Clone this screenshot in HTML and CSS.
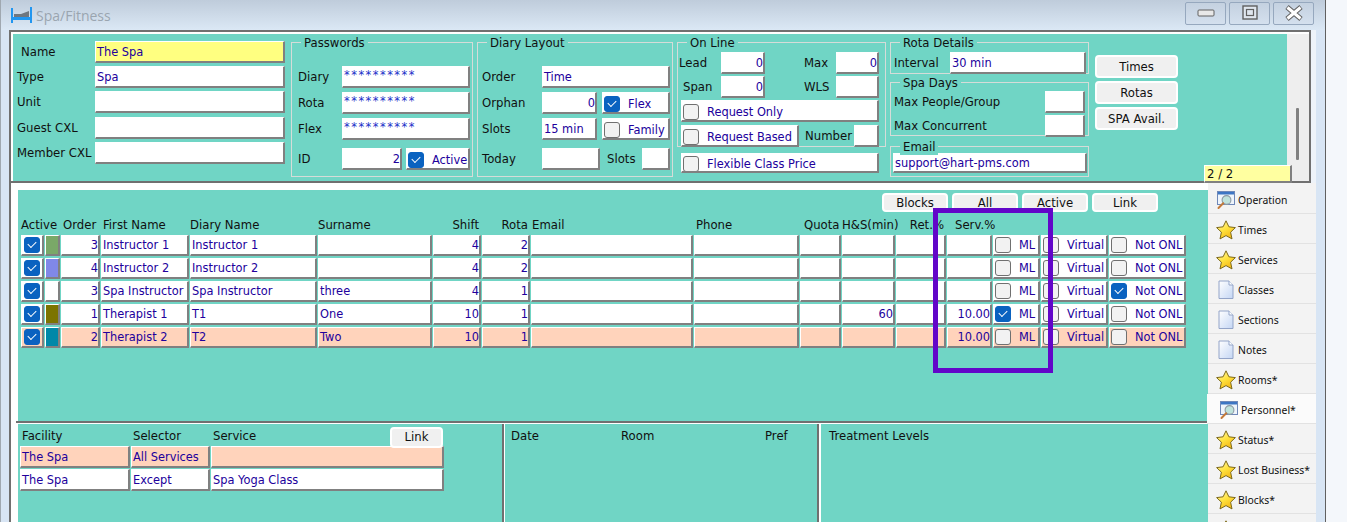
FILE: index.html
```html
<!DOCTYPE html>
<html lang="en">
<head>
  <meta charset="UTF-8">
  <title>Spa/Fitness</title>
  <link rel="stylesheet" href="styles.css">
</head>
<body>

  <!-- Shared icons -->
  <svg class="icon-defs" width="0" height="0">
    <defs>
      <linearGradient id="star-fill" x1="0" y1="0" x2="0.6" y2="1">
        <stop offset="0" stop-color="#fff8c0"/>
        <stop offset="0.55" stop-color="#ffe23c"/>
        <stop offset="1" stop-color="#f4b818"/>
      </linearGradient>
      <linearGradient id="page-fill" x1="0" y1="0" x2="1" y2="1">
        <stop offset="0" stop-color="#ffffff"/>
        <stop offset="1" stop-color="#c4d6f4"/>
      </linearGradient>
    </defs>
    <symbol id="star" viewBox="0 0 20 20">
      <path d="M10 .8 L12.9 6.8 L19.4 7.6 L14.6 12.2 L16 18.9 L10 15.6 L4 18.9 L5.4 12.2 L.6 7.6 L7.1 6.8 Z" fill="url(#star-fill)" stroke="#7d6a1c" stroke-width="1" stroke-linejoin="round"/>
    </symbol>
    <symbol id="page" viewBox="0 0 20 20">
      <path d="M3 1 H13 L17 5 V18.5 H3 Z" fill="url(#page-fill)" stroke="#93a4c8" stroke-width="1"/>
      <path d="M13 1 V5 H17" fill="#ffffff" stroke="#93a4c8" stroke-width="1"/>
    </symbol>
    <symbol id="lens" viewBox="0 0 20 20">
      <rect x="1.5" y="1.5" width="17" height="13" fill="#eef4fb" stroke="#6f88b8"/>
      <rect x="2" y="2" width="16" height="2.5" fill="#3d76c4"/>
      <circle cx="10.5" cy="10" r="4.4" fill="#bfe3dc" stroke="#8c9aa4" stroke-width="1.1"/>
      <path d="M7.2 13.2 L2.5 18" stroke="#c47a3a" stroke-width="2" stroke-linecap="round"/>
    </symbol>
  </svg>

  <div class="app">
    <div class="titlebar">
      <svg class="bed-icon" width="21" height="16" viewBox="0 0 21 16">
        <rect x="0" y="1" width="2" height="15" fill="#2196f0"/>
        <rect x="19" y="0" width="2" height="16" fill="#2196f0"/>
        <rect x="2" y="10" width="17" height="3" fill="#2196f0"/>
        <path d="M3 10 V7 H10 L18 4 V10 Z" fill="#6f7780"/>
      </svg>
      <span class="title-text">Spa/Fitness</span>
      <div class="window-buttons">
        <div class="window-btn">
          <svg width="18" height="10" viewBox="0 0 18 10"><rect x="1" y="2" width="16" height="6" rx="1" fill="#e8e8e8" stroke="#606060"/></svg>
        </div>
        <div class="window-btn">
          <svg width="18" height="16" viewBox="0 0 18 16"><rect x="2" y="1" width="14" height="13" fill="#dfe6ee" stroke="#606060" stroke-width="1.4"/><rect x="5.5" y="4.5" width="7" height="6" fill="none" stroke="#606060" stroke-width="1.2"/></svg>
        </div>
        <div class="window-btn">
          <svg width="18" height="16" viewBox="0 0 18 16"><path d="M2 2 L16 14 M16 2 L2 14" stroke="#606060" stroke-width="5"/><path d="M2.5 2.5 L15.5 13.5 M15.5 2.5 L2.5 13.5" stroke="#ffffff" stroke-width="3"/></svg>
        </div>
      </div>
    </div>

    <div class="content">
      <!-- Top form -->
      <div class="top-panel">
        <div class="top-form">

          <div class="main-fields">
            <label class="name-label">Name</label><div class="field yellow">The Spa</div>
            <label>Type</label><div class="field">Spa</div>
            <label>Unit</label><div class="field"></div>
            <label>Guest CXL</label><div class="field"></div>
            <label>Member CXL</label><div class="field"></div>
          </div>

          <div class="group passwords">
            <span class="legend">Passwords</span>
            <div class="group-grid">
              <label>Diary</label><div class="field stars">**********</div>
              <label>Rota</label><div class="field stars">**********</div>
              <label>Flex</label><div class="field stars">**********</div>
              <label>ID</label>
              <div class="pair">
                <div class="field num id-field">2</div>
                <div class="field check-field active-box"><span class="check on"></span>Active</div>
              </div>
            </div>
          </div>

          <div class="group diary">
            <span class="legend">Diary Layout</span>
            <div class="group-grid">
              <label>Order</label><div class="field">Time</div>
              <label>Orphan</label>
              <div class="pair">
                <div class="field num short">0</div>
                <div class="field check-field side-box"><span class="check on"></span>Flex</div>
              </div>
              <label>Slots</label>
              <div class="pair">
                <div class="field short">15 min</div>
                <div class="field check-field side-box"><span class="check"></span>Family</div>
              </div>
              <label>Today</label>
              <div class="pair">
                <div class="field today"></div>
                <label class="slots-label">Slots</label>
                <div class="field slots"></div>
              </div>
            </div>
          </div>

          <div class="online-col">
            <div class="group online">
              <span class="legend">On Line</span>
              <div class="online-row">
                <label class="lead-label">Lead</label><div class="field num small">0</div>
                <label class="right-label">Max</label><div class="field num small-b">0</div>
              </div>
              <div class="online-row">
                <label class="span-label">Span</label><div class="field num small">0</div>
                <label class="right-label">WLS</label><div class="field small-b"></div>
              </div>
              <div class="field check-field request-only"><span class="check"></span>Request Only</div>
              <div class="online-row">
                <div class="field check-field request-based"><span class="check"></span>Request Based</div>
                <label class="number-label">Number</label><div class="field number"></div>
              </div>
            </div>
            <div class="field check-field flexible"><span class="check"></span>Flexible Class Price</div>
          </div>

          <div class="rota-col">
            <div class="group rota">
              <span class="legend">Rota Details</span>
              <div class="online-row">
                <label class="interval-label">Interval</label><div class="field interval">30 min</div>
              </div>
            </div>
            <div class="group spa-days">
              <span class="legend">Spa Days</span>
              <div class="days-row"><label>Max People/Group</label><div class="field days"></div></div>
              <div class="days-row"><label>Max Concurrent</label><div class="field days"></div></div>
            </div>
            <div class="group email">
              <span class="legend">Email</span>
              <div class="field email-field">support@hart-pms.com</div>
            </div>
          </div>

          <div class="button-col">
            <div class="btn">Times</div>
            <div class="btn">Rotas</div>
            <div class="btn">SPA Avail.</div>
          </div>
        </div>
        <div class="scroll-gutter"><div class="scroll-thumb"></div></div>
      </div>

      <div class="main-row">
        <div class="main-left">
          <!-- Personnel list -->
          <div class="staff-panel">
            <div class="staff-actions">
              <div class="btn">Blocks</div>
              <div class="btn">All</div>
              <div class="btn">Active</div>
              <div class="btn">Link</div>
            </div>
            <div class="staff-grid">
              <div class="head">Active</div><div class="head"></div><div class="head pad">Order</div>
              <div class="head pad">First Name</div><div class="head">Diary Name</div><div class="head">Surname</div>
              <div class="head right">Shift</div><div class="head right">Rota</div><div class="head pad-1">Email</div>
              <div class="head pad">Phone</div><div class="head pad-4">Quota</div><div class="head">H&amp;S(min)</div>
              <div class="head right">Ret.%</div><div class="head serv">Serv.%</div><div class="head"></div><div class="head"></div><div class="head"></div>

              <div class="field check-cell"><span class="check on"></span></div><div class="field swatch green"></div><div class="field num">3</div>
              <div class="field">Instructor 1</div><div class="field">Instructor 1</div><div class="field"></div>
              <div class="field num">4</div><div class="field num">2</div><div class="field"></div><div class="field"></div><div class="field"></div><div class="field"></div><div class="field"></div><div class="field"></div>
              <div class="field check-field split"><span class="check"></span>ML</div><div class="field check-field split"><span class="check"></span>Virtual</div><div class="field check-field split"><span class="check"></span>Not ONL</div>

              <div class="field check-cell"><span class="check on"></span></div><div class="field swatch periwinkle"></div><div class="field num">4</div>
              <div class="field">Instructor 2</div><div class="field">Instructor 2</div><div class="field"></div>
              <div class="field num">4</div><div class="field num">2</div><div class="field"></div><div class="field"></div><div class="field"></div><div class="field"></div><div class="field"></div><div class="field"></div>
              <div class="field check-field split"><span class="check"></span>ML</div><div class="field check-field split"><span class="check"></span>Virtual</div><div class="field check-field split"><span class="check"></span>Not ONL</div>

              <div class="field check-cell"><span class="check on"></span></div><div class="field swatch"></div><div class="field num">3</div>
              <div class="field">Spa Instructor</div><div class="field">Spa Instructor</div><div class="field">three</div>
              <div class="field num">4</div><div class="field num">1</div><div class="field"></div><div class="field"></div><div class="field"></div><div class="field"></div><div class="field"></div><div class="field"></div>
              <div class="field check-field split"><span class="check"></span>ML</div><div class="field check-field split"><span class="check"></span>Virtual</div><div class="field check-field split"><span class="check on"></span>Not ONL</div>

              <div class="field check-cell"><span class="check on"></span></div><div class="field swatch olive"></div><div class="field num">1</div>
              <div class="field">Therapist 1</div><div class="field">T1</div><div class="field">One</div>
              <div class="field num">10</div><div class="field num">1</div><div class="field"></div><div class="field"></div><div class="field"></div><div class="field num">60</div><div class="field"></div><div class="field num">10.00</div>
              <div class="field check-field split"><span class="check on"></span>ML</div><div class="field check-field split"><span class="check"></span>Virtual</div><div class="field check-field split"><span class="check"></span>Not ONL</div>

              <div class="field peach check-cell"><span class="check on"></span></div><div class="field swatch teal"></div><div class="field peach num">2</div>
              <div class="field peach">Therapist 2</div><div class="field peach">T2</div><div class="field peach">Two</div>
              <div class="field peach num">10</div><div class="field peach num">1</div><div class="field peach"></div><div class="field peach"></div><div class="field peach"></div><div class="field peach"></div><div class="field peach"></div><div class="field peach num">10.00</div>
              <div class="field peach check-field split"><span class="check"></span>ML</div><div class="field peach check-field split"><span class="check"></span>Virtual</div><div class="field peach check-field split"><span class="check"></span>Not ONL</div>
            </div>
          </div>

          <!-- Lower panels -->
          <div class="lower-row">
            <div class="lower-panel facility">
              <div class="facility-head">
                <span class="fac-col">Facility</span><span class="sel-col">Selector</span><span>Service</span>
                <div class="btn link-btn">Link</div>
              </div>
              <div class="facility-grid">
                <div class="field peach">The Spa</div><div class="field peach">All Services</div><div class="field peach"></div>
                <div class="field">The Spa</div><div class="field">Except</div><div class="field">Spa Yoga Class</div>
              </div>
            </div>
            <div class="lower-panel dates">
              <span class="date-col">Date</span><span class="room-col">Room</span><span>Pref</span>
            </div>
            <div class="lower-panel levels">Treatment Levels</div>
          </div>
        </div>

        <!-- Side tabs -->
        <div class="side-tabs">
          <div class="tab"><svg class="tab-icon"><use href="#lens"/></svg>Operation</div>
          <div class="tab"><svg class="tab-icon"><use href="#star"/></svg>Times</div>
          <div class="tab"><svg class="tab-icon"><use href="#star"/></svg>Services</div>
          <div class="tab"><svg class="tab-icon"><use href="#page"/></svg>Classes</div>
          <div class="tab"><svg class="tab-icon"><use href="#page"/></svg>Sections</div>
          <div class="tab"><svg class="tab-icon"><use href="#page"/></svg>Notes</div>
          <div class="tab"><svg class="tab-icon"><use href="#star"/></svg>Rooms*</div>
          <div class="tab selected"><svg class="tab-icon"><use href="#lens"/></svg>Personnel*</div>
          <div class="tab"><svg class="tab-icon"><use href="#star"/></svg>Status*</div>
          <div class="tab"><svg class="tab-icon"><use href="#star"/></svg>Lost Business*</div>
          <div class="tab"><svg class="tab-icon"><use href="#star"/></svg>Blocks*</div>
          <div class="tab"><svg class="tab-icon"><use href="#star"/></svg></div>
        </div>
      </div>
    </div>

    <div class="record-count">2 / 2</div>
    <div class="highlight-box"></div>
  </div>

</body>
</html>
```

FILE: styles.css
```css
* {
  box-sizing: border-box;
}

html, body {
  margin: 0;
  padding: 0;
  height: 522px;
  overflow: hidden;
  background-color: #f4f7fb;
}

body {
  font-family: 'DejaVu Sans', sans-serif;
  font-size: 11.7px;
  color: #101010;
}

.icon-defs {
  position: absolute;
}

.app {
  position: relative;
  width: 1326px;
  height: 522px;
  background-color: #d8e5f4;
  border-left: 1px solid #a0a8b0;
  border-right: 1px solid #606060;
  overflow: hidden;
}

/* Title bar */
.titlebar {
  display: flex;
  align-items: center;
  height: 30px;
  padding-left: 10px;
  background: linear-gradient(180deg, #bfccdb 0%, #dbe8f5 100%);
}

.bed-icon {
  margin-right: 4px;
}

.title-text {
  font-family: 'Open Sans', sans-serif;
  font-size: 14px;
  color: #9aa5b0;
}

.window-buttons {
  display: flex;
  gap: 3px;
  margin-left: auto;
  margin-right: 11px;
  margin-top: -4px;
}

.window-btn {
  display: flex;
  align-items: center;
  justify-content: center;
  width: 41px;
  height: 23px;
  border: 1px solid #96a8be;
  border-radius: 2px;
  background: linear-gradient(180deg, #c4d1e0 0%, #d4e0ee 100%);
}

.content {
  width: 1307px;
  margin-left: 8px;
  background-color: #eef3f9;
}

/* Top form */
.top-panel {
  display: flex;
  width: 1302px;
  height: 153px;
  border: 2px solid #707070;
  background-color: #ffffff;
  padding: 2px 0 0 2px;
}

.top-form {
  display: flex;
  align-items: flex-start;
  width: 1274px;
  height: 147px;
  background-color: #70d5c5;
}

.scroll-gutter {
  width: 22px;
  padding: 74px 0 0 9px;
  background-color: #eeeeee;
}

.scroll-thumb {
  width: 3px;
  height: 52px;
  background-color: #808080;
  border-radius: 1px;
}

label {
  white-space: nowrap;
}

.field {
  height: 22px;
  padding: 0 0 0 1px;
  font-size: 11.4px;
  line-height: 20px;
  background-color: #ffffff;
  color: #21009c;
  border-style: solid;
  border-width: 1px 2px 2px 1px;
  border-color: #ffffff #808080 #808080 #ffffff;
  white-space: nowrap;
  overflow: hidden;
}

.num {
  text-align: right;
}

.yellow {
  background-color: #ffff80;
}

.peach {
  background-color: #ffd3bb;
}

.stars {
  color: #1a30c8;
  letter-spacing: 1.5px;
  line-height: 16px;
}

.check-field {
  display: flex;
  align-items: center;
  gap: 8px;
  padding: 0 0 0 1px;
}

.top-form .check-field {
  padding-top: 2px;
}

.check-field.split {
  justify-content: space-between;
  padding-right: 3px;
}

.check-cell {
  display: flex;
  align-items: center;
  justify-content: center;
  padding: 0;
}

.check {
  position: relative;
  flex: none;
  width: 16px;
  height: 16px;
  border: 1px solid #707070;
  border-radius: 3px;
  background-color: #f2f2f2;
}

.check.on {
  border-color: #0a62c0;
  background-color: #0a62c0;
}

.check.on::after {
  content: "";
  position: absolute;
  left: 3px;
  top: 3px;
  width: 7px;
  height: 4px;
  border-left: 1px solid #ffffff;
  border-bottom: 1px solid #ffffff;
  transform: rotate(-45deg);
}

.btn {
  height: 23px;
  line-height: 20px;
  text-align: center;
  background-color: #f0f0f0;
  border: 2px solid #ffffff;
  border-radius: 4px;
}

.main-fields {
  display: grid;
  grid-template-columns: 78px 190px;
  grid-template-rows: 21px 21px 22px 21px 22px;
  row-gap: 4px;
  margin: 7px 0 0 4px;
  line-height: 22px;
}

.name-label {
  padding-left: 4px;
}

.group {
  position: relative;
  border: 1px solid #d5dcd8;
}

.legend {
  position: absolute;
  top: -8px;
  left: 9px;
  padding: 0 3px;
  line-height: 16px;
  background-color: #70d5c5;
}

.group-grid {
  display: grid;
  grid-template-rows: 26px 26px 30px 22px;
  line-height: 22px;
}

.pair {
  display: flex;
  gap: 4px;
}

.passwords {
  width: 182px;
  height: 135px;
  margin: 8px 0 0 6px;
  padding: 23px 0 0 6px;
}

.passwords .group-grid {
  grid-template-columns: 44px 128px;
}

.id-field {
  width: 60px;
}

.active-box {
  width: 64px;
}

.diary {
  width: 196px;
  height: 135px;
  margin: 8px 0 0 4px;
  padding: 23px 0 0 4px;
}

.diary .group-grid {
  grid-template-columns: 60px 128px;
}

.short {
  width: 55px;
}

.side-box {
  width: 68px;
  margin-left: 1px;
}

.today {
  width: 58px;
}

.slots-label {
  width: 31px;
  margin-left: 3px;
}

.slots {
  width: 28px;
}

.online-col {
  width: 209px;
  margin: 8px 0 0 4px;
}

.online {
  height: 105px;
  padding-top: 9px;
}

.online-row {
  display: flex;
  height: 24px;
  line-height: 22px;
}

.lead-label {
  width: 43px;
  padding-left: 1px;
}

.span-label {
  width: 43px;
  padding-left: 5px;
}

.small {
  width: 44px;
}

.small-b {
  width: 43px;
}

.right-label {
  width: 32px;
  margin-left: 39px;
}

.request-only {
  width: 198px;
  height: 22px;
  margin: 0 0 3px 3px;
}

.online-row .request-based {
  width: 118px;
  margin-left: 3px;
}

.number-label {
  width: 49px;
  margin-left: 6px;
}

.number {
  width: 25px;
}

.flexible {
  width: 198px;
  height: 20px;
  margin: 6px 0 0 4px;
}

.rota-col {
  width: 199px;
  margin: 8px 0 0 4px;
}

.rota {
  height: 32px;
  padding-top: 9px;
}

.interval-label {
  width: 59px;
  padding-left: 3px;
}

.interval {
  width: 136px;
}

.spa-days {
  height: 54px;
  margin-top: 8px;
  padding: 8px 3px 0 3px;
}

.days-row {
  display: flex;
  justify-content: space-between;
  height: 24px;
  line-height: 22px;
}

.days {
  width: 40px;
}

.email {
  height: 31px;
  margin-top: 10px;
  padding: 6px 0 0 2px;
}

.email-field {
  width: 194px;
  height: 20px;
  line-height: 19px;
}

.button-col {
  display: flex;
  flex-direction: column;
  gap: 3px;
  width: 83px;
  margin: 21px 0 0 6px;
}

/* Personnel list */
.main-row {
  display: flex;
  height: 339px;
}

.main-left {
  width: 1199px;
  padding: 7px 0 0 7px;
  border-left: 2px solid #707070;
  background-color: #ffffff;
}

.staff-panel {
  height: 231px;
  padding: 3px 0 0 3px;
  background-color: #70d5c5;
}

.staff-actions {
  display: flex;
  justify-content: flex-end;
  gap: 4px;
  padding-right: 50px;
}

.staff-actions .btn {
  width: 66px;
  height: 19px;
  line-height: 16px;
}

.staff-grid {
  display: grid;
  grid-template-columns: 23px 15px 39px 88px 127px 114px 48px 48px 162px 105px 41px 53px 50px 45px 47px 67px 77px;
  grid-template-rows: 18px;
  grid-auto-rows: 20px;
  column-gap: 1px;
  row-gap: 3px;
  margin-top: 2px;
}

.staff-grid .field {
  height: 21px;
  line-height: 19px;
}

.head {
  padding-top: 3px;
  line-height: 17px;
  white-space: nowrap;
}

.head.pad {
  padding-left: 2px;
}

.head.pad-1 {
  padding-left: 1px;
}

.head.pad-4 {
  padding-left: 4px;
}

.head.right {
  padding-right: 2px;
  text-align: right;
}

.head.serv {
  padding-left: 8px;
}

.staff-grid .swatch {
  padding: 0;
}

.green { background-color: #7aa868; }
.periwinkle { background-color: #8088e8; }
.olive { background-color: #7c7400; }
.teal { background-color: #0088a8; }

/* Lower panels */
.lower-row {
  display: flex;
  height: 101px;
  margin-left: -2px;
  border-top: 2px solid #707070;
  padding-top: 1px;
  background-color: #ffffff;
}

.lower-panel {
  background-color: #70d5c5;
}

.facility {
  position: relative;
  width: 488px;
  margin-right: 1px;
  padding-left: 2px;
  border-left: 2px solid #ffffff;
  border-right: 2px solid #707070;
}

.facility-head {
  display: flex;
  height: 22px;
  padding: 4px 0 0 2px;
  line-height: 17px;
}

.fac-col {
  width: 111px;
}

.sel-col {
  width: 80px;
}

.link-btn {
  position: absolute;
  left: 372px;
  top: 3px;
  width: 53px;
  height: 21px;
  line-height: 17px;
}

.facility-grid {
  display: grid;
  grid-template-columns: 110px 79px 233px;
  grid-auto-rows: 22px;
  gap: 1px;
}

.dates {
  display: flex;
  width: 314px;
  padding: 4px 0 0 6px;
  line-height: 17px;
  border-right: 2px solid #707070;
  margin-right: 2px;
}

.date-col {
  width: 110px;
}

.room-col {
  width: 144px;
}

.levels {
  flex: 1;
  padding: 4px 0 0 8px;
  line-height: 17px;
}

/* Side tabs */
.side-tabs {
  width: 108px;
  height: 339px;
  padding-top: 1px;
  background-color: #f3f3f3;
}

.tab {
  display: flex;
  align-items: center;
  height: 30px;
  padding: 2px 0 0 8px;
  font-family: 'Noto Sans', sans-serif;
  font-size: 10.4px;
  border-bottom: 1px solid #e2e2e2;
  white-space: nowrap;
}

.tab.selected {
  margin-left: -1px;
  padding-left: 12px;
  background-color: #fbfbfb;
}

.tab-icon {
  flex: none;
  width: 20px;
  height: 20px;
  margin-right: 2px;
}

/* Overlays */
.record-count {
  position: absolute;
  left: 1203px;
  top: 165px;
  width: 88px;
  height: 18px;
  padding-left: 2px;
  line-height: 17px;
  background-color: #ffffa0;
  border-style: solid;
  border-width: 1px 2px 2px 1px;
  border-color: #ffffff #808080 #808080 #ffffff;
}

.highlight-box {
  position: absolute;
  left: 932px;
  top: 208px;
  width: 120px;
  height: 165px;
  border: 5px solid #6206c9;
}
```
